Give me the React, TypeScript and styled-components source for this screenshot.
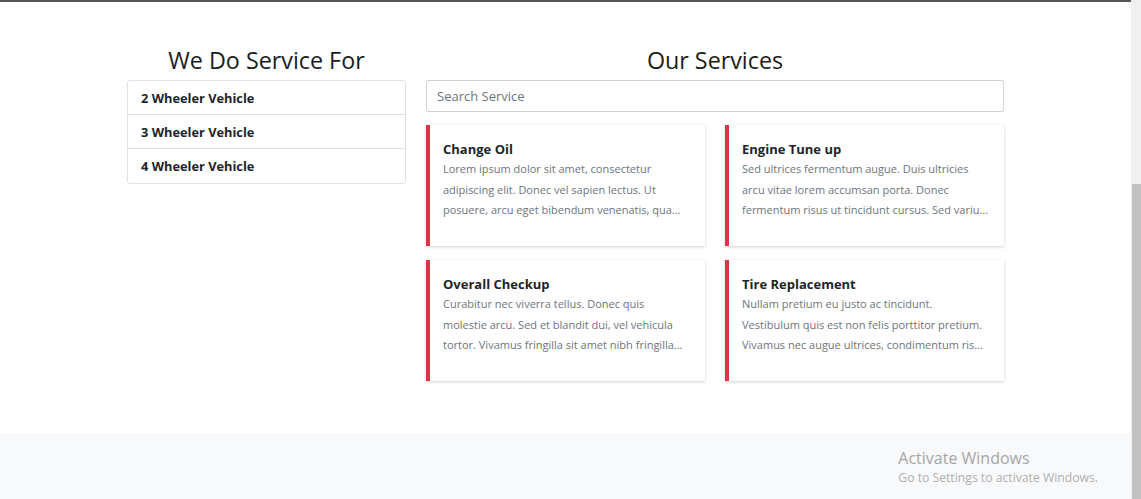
import React from "react";
import styled, { createGlobalStyle } from "styled-components";

const vehicles = ["2 Wheeler Vehicle", "3 Wheeler Vehicle", "4 Wheeler Vehicle"];

// descriptions are already cut to three lines, as the page shows them
const services = [
  {
    title: "Change Oil",
    text: "Lorem ipsum dolor sit amet, consectetur adipiscing elit. Donec vel sapien lectus. Ut posuere, arcu eget bibendum venenatis, qua...",
  },
  {
    title: "Engine Tune up",
    text: "Sed ultrices fermentum augue. Duis ultricies arcu vitae lorem accumsan porta. Donec fermentum risus ut tincidunt cursus. Sed variu...",
  },
  {
    title: "Overall Checkup",
    text: "Curabitur nec viverra tellus. Donec quis molestie arcu. Sed et blandit dui, vel vehicula tortor. Vivamus fringilla sit amet nibh fringilla...",
  },
  {
    title: "Tire Replacement",
    text: "Nullam pretium eu justo ac tincidunt. Vestibulum quis est non felis porttitor pretium. Vivamus nec augue ultrices, condimentum ris...",
  },
];

const GlobalStyle = createGlobalStyle`
  html, body {
    margin: 0;
    padding: 0;
    height: 100%;
    overflow: hidden;
  }
  body {
    font-family: "Open Sans", "Noto Sans", sans-serif;
    color: #212529;
    background: #fff;
  }
  * { box-sizing: border-box; }
`;

function App() {
  return (
    <>
      <GlobalStyle />
      <Window>
        <Page>
          <Main>
            <Container>
              <Column width={279}>
                <Heading>We Do Service For</Heading>
                <VehicleList>
                  {vehicles.map((v) => (
                    <VehicleItem key={v}>{v}</VehicleItem>
                  ))}
                </VehicleList>
              </Column>
              <Column width={578}>
                <Heading>Our Services</Heading>
                <SearchInput placeholder="Search Service" />
                <CardGrid>
                  {services.map((s) => (
                    <Card key={s.title}>
                      <CardTitle>{s.title}</CardTitle>
                      <CardText>{s.text}</CardText>
                    </Card>
                  ))}
                </CardGrid>
              </Column>
            </Container>
          </Main>
          <Footer>
            <Watermark>
              <WatermarkTitle>Activate Windows</WatermarkTitle>
              <WatermarkSub>Go to Settings to activate Windows.</WatermarkSub>
            </Watermark>
          </Footer>
        </Page>
        <Scrollbar>
          <ScrollThumb />
        </Scrollbar>
      </Window>
    </>
  );
}

export default App;

const Window = styled.div`
  display: flex;
  width: 1141px;
  height: 499px;
  overflow: hidden;
`;

const Page = styled.div`
  flex: 1;
  display: flex;
  flex-direction: column;
  border-top: 2px solid #555;
`;

const Main = styled.main`
  padding: 44px 0 52px;
`;

const Container = styled.div`
  display: flex;
  justify-content: center;
  gap: 20px;
`;

const Column = styled.div<{ width: number }>`
  width: ${({ width }) => width}px;
  display: flex;
  flex-direction: column;
`;

const Heading = styled.h3`
  margin: 0 0 5px;
  text-align: center;
  font-size: 23.3px;
  font-weight: 500;
  line-height: 29px;
  color: #1a1d20;
`;

const VehicleList = styled.div`
  border: 1px solid #dee2e6;
  border-radius: 3px;
  display: flex;
  flex-direction: column;
`;

const VehicleItem = styled.div`
  height: 34px;
  padding: 0 13px;
  display: flex;
  align-items: center;
  font-size: 12.8px;
  font-weight: 700;
  color: #212529;

  &:not(:last-of-type) {
    border-bottom: 1px solid #dee2e6;
  }
`;

const SearchInput = styled.input`
  height: 32px;
  width: 100%;
  border: 1px solid #ced4da;
  border-radius: 2px;
  padding: 0 10px;
  font-family: inherit;
  font-size: 13px;
  color: #495057;
  outline: none;

  &::placeholder {
    color: #6c757d;
  }
`;

const CardGrid = styled.div`
  margin-top: 13px;
  display: grid;
  grid-template-columns: 1fr 1fr;
  column-gap: 20px;
  row-gap: 14px;
`;

const Card = styled.div`
  height: 121px;
  background: #fff;
  border-left: 4px solid #dc3545;
  box-shadow: 0 1px 3px rgba(0, 0, 0, 0.18);
  padding: 14px 14px 0 13px;
`;

const CardTitle = styled.div`
  font-size: 13px;
  font-weight: 700;
  line-height: 20px;
  color: #212529;
`;

const CardText = styled.p`
  margin: 0;
  font-size: 11px;
  line-height: 20.5px;
  color: #6c757d;
`;

const Footer = styled.footer`
  flex: 1;
  background: #f8f9fa;
  display: flex;
  justify-content: flex-end;
  padding: 15px 33px 0 0;
`;

const Watermark = styled.div`
  display: flex;
  flex-direction: column;
  color: #a6a6a6;
`;

const WatermarkTitle = styled.span`
  font-size: 16px;
  line-height: 21px;
`;

const WatermarkSub = styled.span`
  font-size: 12.2px;
  line-height: 18px;
  color: #b0b0b0;
`;

const Scrollbar = styled.div`
  width: 10px;
  background: #f0f0f0;
  display: flex;
  flex-direction: column;
  justify-content: flex-end;
`;

const ScrollThumb = styled.div`
  height: 315px;
  margin-left: 1px;
  background: #c1c1c1;
`;
